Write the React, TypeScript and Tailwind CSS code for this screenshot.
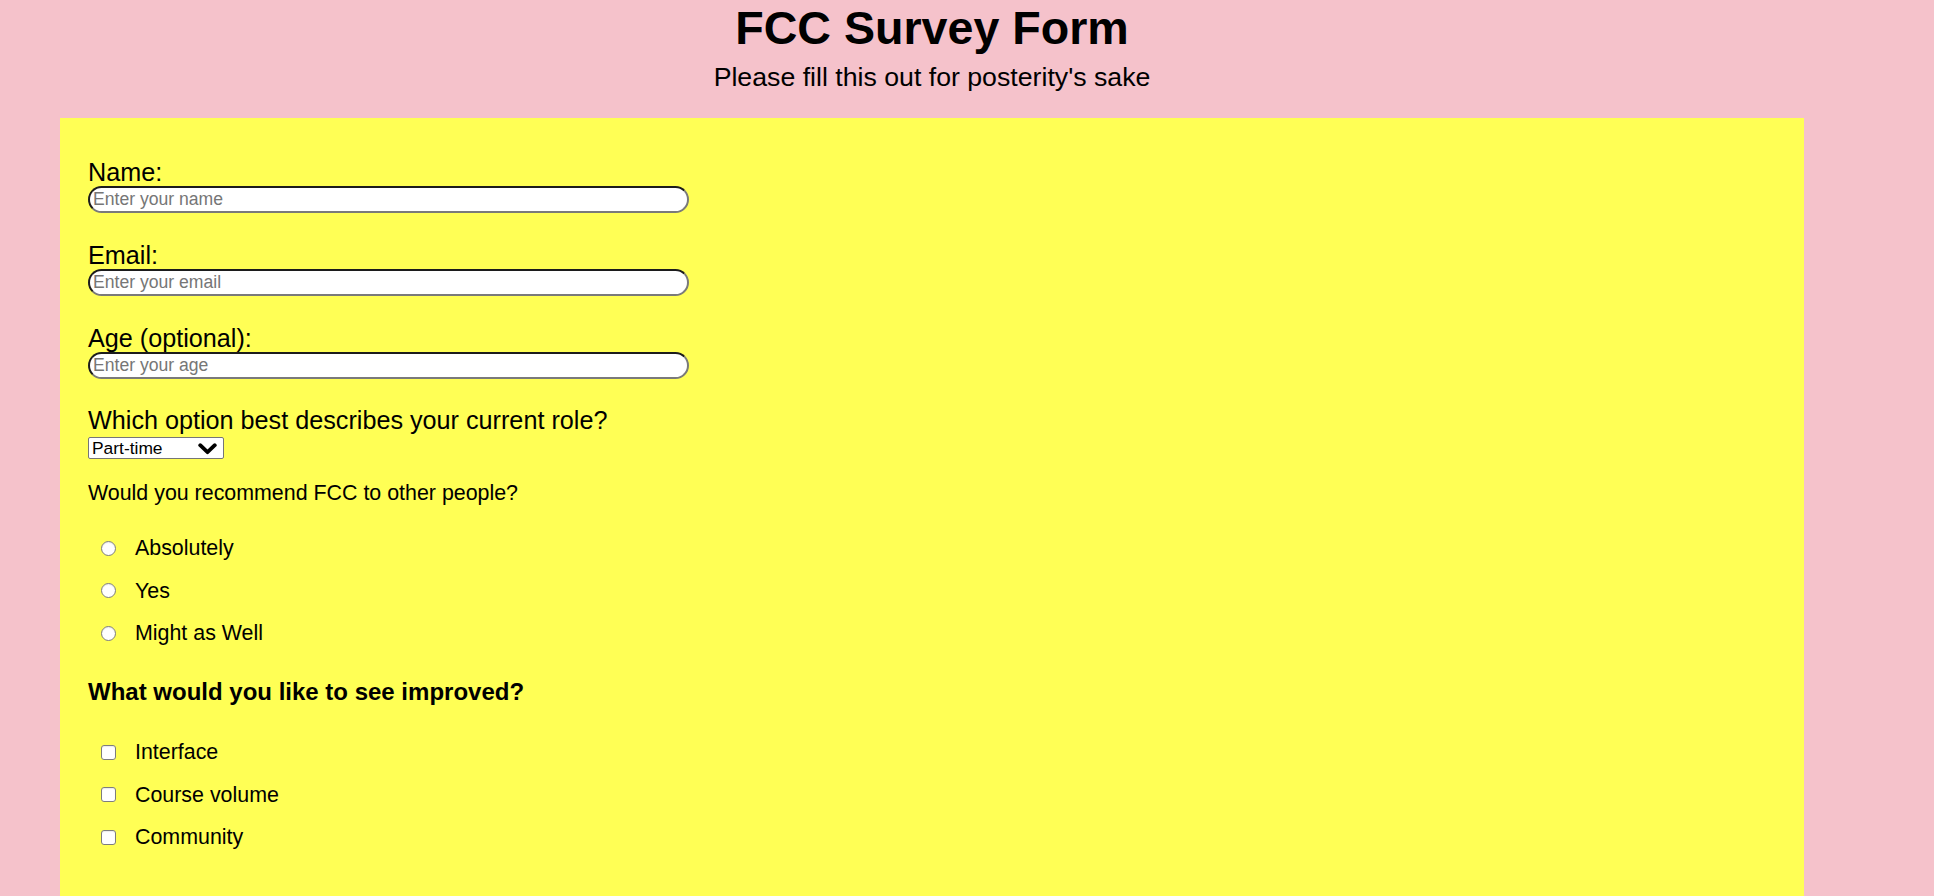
import React from "react";

function TextField({
  label,
  placeholder,
  type,
  className,
}: {
  label: string;
  placeholder: string;
  type: string;
  className?: string;
}) {
  return (
    <div className={className}>
      <label className="block text-[25.2px] leading-[28px]">{label}</label>
      <input
        type={type}
        placeholder={placeholder}
        className="block h-[27px] w-[601px] rounded-[14px] border-2 border-solid border-t-[#1c1c1c] border-l-[#1c1c1c] border-r-[#7a7a7a] border-b-[#7a7a7a] bg-white px-[3px] text-[17.6px] leading-[20px] text-black outline-none placeholder:text-[#767676]"
      />
    </div>
  );
}

function Choice({ label, kind, name }: { label: string; kind: "radio" | "checkbox"; name: string }) {
  return (
    <label className="flex h-[42.5px] items-center">
      <input
        type={kind}
        name={name}
        className={
          kind === "radio"
            ? "ml-[12.5px] h-[15px] w-[15px] shrink-0 appearance-none rounded-full border border-solid border-[#7d7d7d] bg-white shadow-[inset_0_1px_1px_rgba(0,0,0,0.08)]"
            : "ml-[12.5px] h-[15px] w-[15px] shrink-0 appearance-none rounded-[3px] border border-solid border-[#7d7d7d] bg-white shadow-[inset_0_1px_1px_rgba(0,0,0,0.08)]"
        }
      />
      <span className="ml-[19.5px] text-[21.4px] leading-[24px]">{label}</span>
    </label>
  );
}

export default function App() {
  return (
    <div className="flex h-screen w-full flex-col overflow-hidden bg-[#f5c2cb] font-['Liberation_Sans',Arial,sans-serif] text-black">
      <div className="ml-[60px] w-[1744px] shrink-0">
        <h1 className="pt-[2px] text-center text-[46.6px] font-bold leading-[52px]">FCC Survey Form</h1>
        <p className="mt-[8px] text-center text-[26.7px] leading-[30px]">
          Please fill this out for posterity's sake
        </p>
      </div>
      <form className="ml-[60px] mt-[26px] w-[1744px] flex-1 bg-[#ffff55] pl-[28px] pt-[40px]">
        <TextField label="Name:" placeholder="Enter your name" type="text" />
        <TextField label="Email:" placeholder="Enter your email" type="email" className="mt-[28px]" />
        <TextField label="Age (optional):" placeholder="Enter your age" type="number" className="mt-[28px]" />

        <div className="mt-[27px]">
          <label className="block text-[25.2px] leading-[28px]">Which option best describes your current role?</label>
          <div className="relative mt-[3px] h-[22px] w-[136px]">
            <select
              defaultValue="part"
              className="block h-[22px] w-[136px] appearance-none rounded-[2px] border border-solid border-[#767676] bg-white pl-[3px] text-[17.4px] leading-[20px] text-black outline-none"
            >
              <option value="full">Full-time</option>
              <option value="part">Part-time</option>
              <option value="student">Student</option>
            </select>
            <svg
              className="pointer-events-none absolute right-[7px] top-[5.5px]"
              width="19"
              height="12"
              viewBox="0 0 19 12"
              fill="none"
            >
              <path d="M2.2 2.2 L9.5 9.2 L16.8 2.2" stroke="#000" strokeWidth="3.8" strokeLinecap="round" strokeLinejoin="round" />
            </svg>
          </div>
        </div>

        <p className="mt-[22px] text-[21.4px] leading-[24px]">Would you recommend FCC to other people?</p>
        <div className="mt-[22px]">
          <Choice label="Absolutely" kind="radio" name="recommend" />
          <Choice label="Yes" kind="radio" name="recommend" />
          <Choice label="Might as Well" kind="radio" name="recommend" />
        </div>

        <h3 className="mt-[23px] text-[24px] font-bold leading-[28px]">What would you like to see improved?</h3>
        <div className="mt-[25.5px]">
          <Choice label="Interface" kind="checkbox" name="interface" />
          <Choice label="Course volume" kind="checkbox" name="volume" />
          <Choice label="Community" kind="checkbox" name="community" />
        </div>
      </form>
    </div>
  );
}
